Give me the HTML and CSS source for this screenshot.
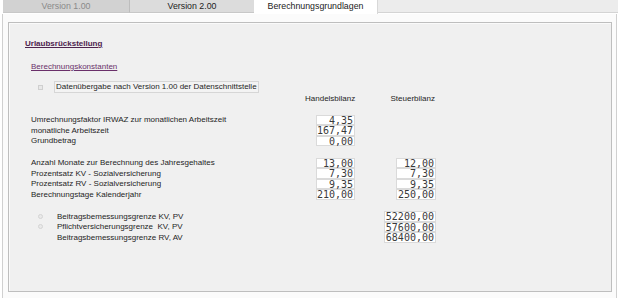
FILE: index.html
```html
<!DOCTYPE html>
<html lang="de">
<head>
  <meta charset="UTF-8">
  <title>Berechnungsgrundlagen</title>
  <link rel="stylesheet" href="styles.css">
</head>
<body>

  <div class="tabs">
    <div class="tab tab-off">Version 1.00</div>
    <div class="tab tab-mid">Version 2.00</div>
    <div class="tab tab-on">Berechnungsgrundlagen</div>
    <div class="tab-rest"></div>
  </div>

  <div class="panel">
    <div class="box">
      <h1 class="titel">Urlaubsrückstellung</h1>

      <div class="form">
        <h2 class="untertitel">Berechnungskonstanten</h2>

        <div class="check-row">
          <span class="checkbox"></span>
          <span class="check-label">Datenübergabe nach Version 1.00 der Datenschnittstelle</span>
        </div>

        <div class="row kopf">
          <span></span>
          <span class="kopf-zelle">Handelsbilanz</span>
          <span class="kopf-zelle">Steuerbilanz</span>
        </div>

        <div class="gruppe">
          <div class="row">
            <span>Umrechnungsfaktor IRWAZ zur monatlichen Arbeitszeit</span>
            <span class="feld">4,35</span>
            <span></span>
          </div>
          <div class="row">
            <span>monatliche Arbeitszeit</span>
            <span class="feld">167,47</span>
            <span></span>
          </div>
          <div class="row">
            <span>Grundbetrag</span>
            <span class="feld">0,00</span>
            <span></span>
          </div>
        </div>

        <div class="gruppe">
          <div class="row">
            <span>Anzahl Monate zur Berechnung des Jahresgehaltes</span>
            <span class="feld">13,00</span>
            <span class="feld rechts">12,00</span>
          </div>
          <div class="row">
            <span>Prozentsatz KV - Sozialversicherung</span>
            <span class="feld">7,30</span>
            <span class="feld rechts">7,30</span>
          </div>
          <div class="row">
            <span>Prozentsatz RV - Sozialversicherung</span>
            <span class="feld">9,35</span>
            <span class="feld rechts">9,35</span>
          </div>
          <div class="row">
            <span>Berechnungstage Kalenderjahr</span>
            <span class="feld">210,00</span>
            <span class="feld rechts">250,00</span>
          </div>
        </div>

        <div class="gruppe">
          <div class="row">
            <span class="radio-label"><span class="radio"></span>Beitragsbemessungsgrenze KV, PV</span>
            <span></span>
            <span class="feld rechts breit">52200,00</span>
          </div>
          <div class="row">
            <span class="radio-label"><span class="radio"></span>Pflichtversicherungsgrenze&nbsp; KV, PV</span>
            <span></span>
            <span class="feld rechts breit">57600,00</span>
          </div>
          <div class="row">
            <span class="radio-label"><span class="radio leer"></span>Beitragsbemessungsgrenze RV, AV</span>
            <span></span>
            <span class="feld rechts breit">68400,00</span>
          </div>
        </div>
      </div>
    </div>
  </div>

</body>
</html>
```

FILE: styles.css
```css
* {
  box-sizing: border-box;
  margin: 0;
  padding: 0;
}
html, body {
  height: 100%;
}
body {
  background: #fff;
  color: #1e1e1e;
  font-family: 'Liberation Sans', Arial, sans-serif;
  font-size: 8px;
  overflow: hidden;
}
.tabs {
  display: flex;
  height: 14px;
  padding-left: 3px;
}
.tab {
  height: 13px;
  line-height: 13px;
  text-align: center;
  font-size: 8.8px;
  border-bottom: 1px solid #c8c8c8;
}
.tab-off {
  width: 127px;
  background: #d2d2d2;
  color: #8a8a8a;
  border-right: 1px solid #bdbdbd;
}
.tab-mid {
  width: 124px;
  background: #dcdcdc;
  color: #222;
}
.tab-on {
  width: 124px;
  height: 14px;
  background: #fff;
  color: #222;
  border-bottom: none;
  border-right: 1px solid #d8d8d8;
}
.tab-rest {
  flex: 1;
  height: 13px;
  background: #ececec;
  border-bottom: 1px solid #d4d4d4;
}
.panel {
  height: 284px;
  margin: 0 1px 0 2px;
  padding: 8px 4px 5px 5px;
  border-left: 1px solid #d0d0d0;
  border-right: 1px solid #d0d0d0;
  background: #fbfbfb;
}
.box {
  height: 270px;
  background: #f0f0f0;
  border: 1px solid #bebebe;
  box-shadow: inset 1px 1px 0 #fafafa;
  padding: 15px 0 0 16px;
}
.titel {
  font-size: 8px;
  font-weight: bold;
  line-height: 11px;
  color: #4e234e;
  text-decoration: underline;
}
.form {
  padding-left: 6px;
}
.untertitel {
  margin-top: 12px;
  font-size: 8px;
  font-weight: normal;
  line-height: 11px;
  color: #6a306a;
  text-decoration: underline;
}
.check-row {
  display: flex;
  align-items: center;
  height: 12px;
  margin-top: 9px;
}
.checkbox {
  width: 5px;
  height: 5px;
  margin-left: 7px;
  margin-right: 11px;
  border: 1px solid #cfcfcf;
  background: #e8e8e8;
}
.check-label {
  height: 12px;
  line-height: 10px;
  padding: 0 1px;
  border: 1px solid #d6d6d6;
  background: #f3f3f3;
}
.row {
  display: grid;
  grid-template-columns: 285px 40px 80px;
  height: 10.5px;
  align-items: center;
}
.kopf {
  height: 10px;
}
.kopf-zelle {
  text-align: right;
  padding-right: 1px;
}
.kopf-zelle:nth-child(2) {
  width: 50px;
  justify-self: end;
  margin-right: 1px;
  text-align: right;
}
.gruppe {
  margin-top: 11.5px;
}
.gruppe:first-of-type {
  margin-top: 12px;
}
.feld {
  display: block;
  width: 39px;
  height: 10.5px;
  line-height: 9px;
  padding-right: 1px;
  background: #fff;
  border: 1px solid #dadada;
  font-family: 'DejaVu Sans Mono', monospace;
  font-size: 10px;
  color: #3a3a3a;
  text-align: right;
}
.rechts {
  width: 40px;
  justify-self: end;
}
.breit {
  width: 52px;
}
.radio-label {
  display: flex;
  align-items: center;
}
.radio {
  width: 5px;
  height: 5px;
  margin-left: 7px;
  margin-right: 14px;
  border: 1px solid #d4d4d4;
  border-radius: 50%;
  background: #e9e9e9;
}
.radio.leer {
  visibility: hidden;
}
```
